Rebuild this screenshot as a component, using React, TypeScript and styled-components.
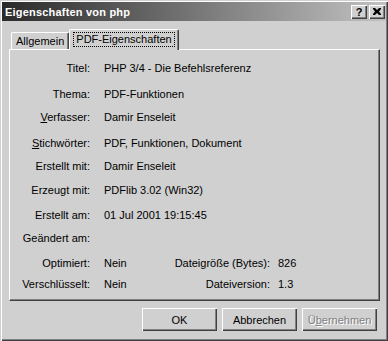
import styled, { createGlobalStyle } from "styled-components";

const GlobalStyle = createGlobalStyle`
  html, body {
    margin: 0;
    padding: 0;
    background: #d0d0d0;
  }
  body {
    font-family: "Liberation Sans", Arial, sans-serif;
    font-size: 11px;
    color: #000;
  }
`;

const rows: { label: React.ReactNode; value: string; gap: number }[] = [
  { label: "Titel:", value: "PHP 3/4 - Die Befehlsreferenz", gap: 0 },
  { label: "Thema:", value: "PDF-Funktionen", gap: 6 },
  { label: <><u>V</u>erfasser:</>, value: "Damir Enseleit", gap: 3 },
  { label: <><u>S</u>tichwörter:</>, value: "PDF, Funktionen, Dokument", gap: 6 },
  { label: "Erstellt mit:", value: "Damir Enseleit", gap: 3 },
  { label: "Erzeugt mit:", value: "PDFlib 3.02 (Win32)", gap: 4 },
  { label: "Erstellt am:", value: "01 Jul 2001 19:15:45", gap: 5 },
  { label: "Geändert am:", value: "", gap: 3 },
];

const App = () => {
  return (
    <>
      <GlobalStyle />
      <Window>
        <TitleBar>
          <TitleText>Eigenschaften von php</TitleText>
          <TitleButtons>
            <CaptionButton>?</CaptionButton>
            <CaptionButton>
              <svg width="8" height="7" viewBox="0 0 8 7">
                <path
                  d="M0 0h2l2 2 2-2h2v1L6 3.5 8 6v1H6L4 5 2 7H0V6l2-2.5L0 1z"
                  fill="#000"
                />
              </svg>
            </CaptionButton>
          </TitleButtons>
        </TitleBar>

        <Body>
          <TabStrip>
            <Tab>Allgemein</Tab>
            <Tab $active>
              <FocusText>PDF-Eigenschaften</FocusText>
            </Tab>
          </TabStrip>

          <Panel>
            {rows.map((r, i) => (
              <Row key={i} $gap={r.gap}>
                <Label>{r.label}</Label>
                <Value>{r.value}</Value>
              </Row>
            ))}
            <Row $gap={5}>
              <Label>Optimiert:</Label>
              <Pair>
                <ShortValue>Nein</ShortValue>
                <SubLabel>Dateigröße (Bytes):</SubLabel>
                <Value>826</Value>
              </Pair>
            </Row>
            <Row $gap={1}>
              <Label>Verschlüsselt:</Label>
              <Pair>
                <ShortValue>Nein</ShortValue>
                <SubLabel>Dateiversion:</SubLabel>
                <Value>1.3</Value>
              </Pair>
            </Row>
          </Panel>

          <ButtonBar>
            <Button>OK</Button>
            <Button>Abbrechen</Button>
            <Button disabled>
              Ü<u>b</u>ernehmen
            </Button>
          </ButtonBar>
        </Body>
      </Window>
    </>
  );
};

export default App;

const Window = styled.div`
  width: 388px;
  height: 341px;
  box-sizing: border-box;
  padding: 2px;
  display: flex;
  flex-direction: column;
  background: #d0d0d0;
  box-shadow: inset 1px 1px 0 #d0d0d0, inset 2px 2px 0 #fff,
    inset -1px -1px 0 #404040, inset -2px -2px 0 #808080;
`;

const TitleBar = styled.div`
  height: 19px;
  display: flex;
  align-items: center;
  justify-content: space-between;
  padding: 0 1px 0 3px;
  background: linear-gradient(to right, #2a2a2a, #c2c2c2);
`;

const TitleText = styled.div`
  color: #fff;
  font-weight: bold;
  font-size: 11px;
  letter-spacing: 0.2px;
`;

const TitleButtons = styled.div`
  display: flex;
  gap: 2px;
`;

const CaptionButton = styled.div`
  width: 16px;
  height: 14px;
  box-sizing: border-box;
  display: flex;
  align-items: center;
  justify-content: center;
  background: #d0d0d0;
  font-weight: bold;
  font-size: 11px;
  box-shadow: inset 1px 1px 0 #fff, inset -1px -1px 0 #404040,
    inset -2px -2px 0 #808080;
`;

const Body = styled.div`
  flex: 1;
  display: flex;
  flex-direction: column;
  padding: 8px 6px 0 7px;
`;

const TabStrip = styled.div`
  height: 20px;
  display: flex;
  align-items: flex-end;
  padding-left: 2px;
`;

const Tab = styled.div<{ $active?: boolean }>`
  position: relative;
  z-index: ${(p) => (p.$active ? 1 : 0)};
  box-sizing: border-box;
  height: ${(p) => (p.$active ? "21px" : "17px")};
  margin-bottom: ${(p) => (p.$active ? "-1px" : "0")};
  padding: ${(p) => (p.$active ? "3px 4px 0 4px" : "2px 4px 0 4px")};
  background: #d0d0d0;
  border-top: 1px solid #fff;
  border-left: 1px solid #fff;
  border-right: 1px solid #404040;
  border-radius: 2px 2px 0 0;
  box-shadow: inset -1px 0 0 #808080;
  font-size: 11px;
  line-height: 13px;
`;

const FocusText = styled.span`
  display: inline-block;
  padding: 0 2px;
  outline: 1px dotted #000;
  outline-offset: 0;
`;

const Panel = styled.div`
  height: 252px;
  box-sizing: border-box;
  padding-top: 8px;
  border-top: 1px solid #fff;
  border-left: 1px solid #fff;
  border-right: 1px solid #404040;
  border-bottom: 1px solid #404040;
  box-shadow: inset -1px -1px 0 #808080;
  display: flex;
  flex-direction: column;
`;

const Row = styled.div<{ $gap: number }>`
  height: 20px;
  margin-top: ${(p) => p.$gap}px;
  display: grid;
  grid-template-columns: 80px 1fr;
  column-gap: 14px;
  align-items: center;
  font-size: 11px;
`;

const Label = styled.div`
  text-align: right;
  white-space: nowrap;
`;

const Value = styled.div`
  white-space: nowrap;
`;

const Pair = styled.div`
  display: flex;
  align-items: center;
`;

const ShortValue = styled.div`
  width: 60px;
`;

const SubLabel = styled.div`
  width: 106px;
  margin-right: 8px;
  text-align: right;
  white-space: nowrap;
`;

const ButtonBar = styled.div`
  display: flex;
  justify-content: flex-end;
  gap: 5px;
  margin-top: 7px;
  padding-right: 3px;
`;

const Button = styled.button`
  width: 75px;
  height: 23px;
  padding: 0;
  border: none;
  background: #d0d0d0;
  font-family: "Liberation Sans", Arial, sans-serif;
  font-size: 11px;
  color: #000;
  box-shadow: inset 1px 1px 0 #fff, inset -1px -1px 0 #404040,
    inset -2px -2px 0 #808080;

  &:disabled {
    color: #808080;
    text-shadow: 1px 1px 0 #fff;
  }
`;
